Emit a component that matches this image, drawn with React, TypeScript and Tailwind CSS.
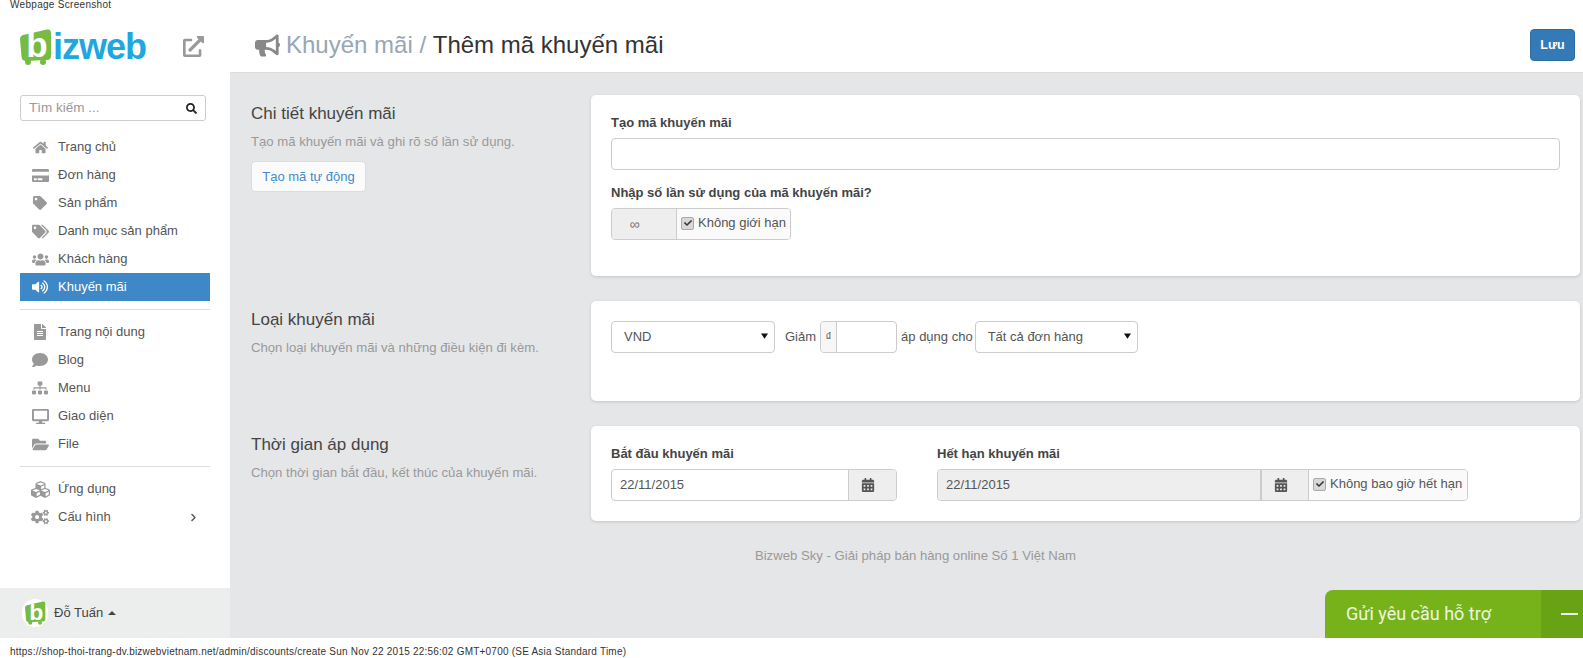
import type { ReactNode } from "react";
import {
  FaBullhorn,
  FaCalendarAlt,
  FaCogs,
  FaComment,
  FaCreditCard,
  FaCubes,
  FaDesktop,
  FaExternalLinkAlt,
  FaFileAlt,
  FaFolderOpen,
  FaHome,
  FaSearch,
  FaSitemap,
  FaTag,
  FaTags,
  FaUsers,
  FaVolumeUp,
  FaCheck,
  FaChevronRight,
} from "react-icons/fa";

const firstMenu = [
  { label: "Trang chủ", icon: <FaHome size={15} /> },
  { label: "Đơn hàng", icon: <FaCreditCard size={17} /> },
  { label: "Sản phẩm", icon: <FaTag size={14} /> },
  { label: "Danh mục sản phẩm", icon: <FaTags size={17} /> },
  { label: "Khách hàng", icon: <FaUsers size={17} /> },
  { label: "Khuyến mãi", icon: <FaVolumeUp size={16} />, active: true },
];

const secondMenu = [
  { label: "Trang nội dung", icon: <FaFileAlt size={16} /> },
  { label: "Blog", icon: <FaComment size={16} /> },
  { label: "Menu", icon: <FaSitemap size={16} /> },
  { label: "Giao diện", icon: <FaDesktop size={17} /> },
  { label: "File", icon: <FaFolderOpen size={17} /> },
];

const MenuRow = ({
  label,
  icon,
  active,
  arrow,
}: {
  label: string;
  icon: ReactNode;
  active?: boolean;
  arrow?: boolean;
}) => {
  return (
    <div
      className={`h-[28px] flex items-center text-[13px] ${
        active ? "bg-[#3f88c8] text-white" : "text-[#555]"
      }`}
    >
      <span
        className={`w-[38px] flex justify-center shrink-0 pl-[2px] ${
          active ? "text-white" : "text-[#999]"
        }`}
      >
        {icon}
      </span>
      <span className="flex-1">{label}</span>
      {arrow && <FaChevronRight size={9} className="mr-[12px] text-[#555]" />}
    </div>
  );
};

const CartLogo = ({ className }: { className: string }) => {
  return (
    <svg viewBox="0 0 32 36" className={`overflow-visible ${className}`}>
      <path
        d="M3 6 L27 0.5 Q31 0 31 4 L31 27 Q31 31 27 31 L6 32 Q2 32 1.5 28 L0 10 Q0 7 3 6 Z"
        fill="#76bc43"
      />
      <circle cx="8" cy="33" r="3" fill="#76bc43" />
      <circle cx="23" cy="33" r="3" fill="#76bc43" />
      <text
        x="17"
        y="28"
        textAnchor="middle"
        fontSize="35"
        fontWeight="700"
        fontFamily="'Liberation Sans', sans-serif"
        fill="#fff"
      >
        b
      </text>
    </svg>
  );
};

const Check = () => {
  return (
    <span className="w-[13px] h-[13px] rounded-[2px] border border-[#aaa] bg-[#d8d8d8] flex items-center justify-center text-[#333] shrink-0">
      <FaCheck size={8} />
    </span>
  );
};

const SelectBox = ({ value, className }: { value: string; className: string }) => {
  return (
    <div className={`relative h-[32px] ${className}`}>
      <select className="w-full h-full appearance-none bg-white border border-[#ccc] rounded-[4px] pl-[12px] text-[13px] text-[#555]">
        <option>{value}</option>
      </select>
      <svg
        viewBox="0 0 8 6"
        className="absolute right-[7px] top-[12px] w-[7px] h-[6px] pointer-events-none"
      >
        <path d="M0 0 H8 L4 6 Z" fill="#111" />
      </svg>
    </div>
  );
};

const Section = ({
  title,
  desc,
  cardClass,
  extra,
  children,
}: {
  title: string;
  desc: string;
  cardClass: string;
  extra?: ReactNode;
  children: ReactNode;
}) => {
  return (
    <div className="flex">
      <div className="w-[340px] shrink-0 pt-[7px]">
        <h2 className="text-[17px] leading-[24px] text-[#444]">{title}</h2>
        <p className="text-[13.15px] leading-[20px] mt-[6px] text-[#999]">{desc}</p>
        {extra}
      </div>
      <div
        className={`flex-1 bg-white rounded-[5px] shadow-[0_1px_3px_rgba(0,0,0,0.15)] px-[20px] ${cardClass}`}
      >
        {children}
      </div>
    </div>
  );
};

const App = () => {
  return (
    <div className="w-[1583px] h-[658px] overflow-hidden flex flex-col bg-white font-['Liberation_Sans',sans-serif]">
      <div className="h-[10px] pl-[10px] text-[10px] leading-[10px] tracking-[0.3px] text-[#333]">
        Webpage Screenshot
      </div>

      <div className="flex-1 flex min-h-0">
        {/* sidebar */}
        <aside className="w-[230px] shrink-0 flex flex-col">
          <div className="h-[62px] pl-[20px] pr-[26px] pt-[11px] flex items-center justify-between">
            <div className="flex items-center">
              <CartLogo className="w-[32px] h-[36px]" />
              <span className="text-[36px] leading-[36px] font-bold tracking-[-1px] text-[#1ea7e0] ml-[1px]">
                izweb
              </span>
            </div>
            <FaExternalLinkAlt size={21} className="text-[#999]" />
          </div>

          <div className="mx-[20px] w-[186px] mt-[23px] h-[26px] border border-[#ccc] rounded-[3px] flex items-center px-[8px]">
            <input
              placeholder="Tìm kiếm ..."
              className="flex-1 min-w-0 text-[13.5px] text-[#555] placeholder:text-[#999] outline-none"
            />
            <FaSearch size={11} className="text-[#222]" />
          </div>

          <nav className="mx-[20px] mt-[12px]">
            {firstMenu.map((item) => (
              <MenuRow key={item.label} {...item} />
            ))}
            <div className="h-px bg-[#ddd] mt-[8px] mb-[8px]" />
            {secondMenu.map((item) => (
              <MenuRow key={item.label} {...item} />
            ))}
            <div className="h-px bg-[#ddd] mt-[8px] mb-[8px]" />
            <MenuRow label="Ứng dụng" icon={<FaCubes size={19} />} />
            <MenuRow label="Cấu hình" icon={<FaCogs size={18} />} arrow />
          </nav>

          <div className="mt-auto h-[50px] bg-[#eceeee] flex items-center pl-[22px] text-[13px] text-[#444]">
            <span className="w-[26px] h-[28px] rounded-full bg-white flex items-center justify-center">
              <CartLogo className="w-[21px] h-[24px]" />
            </span>
            <span className="ml-[6px]">Đỗ Tuấn</span>
            <svg viewBox="0 0 8 4" className="w-[8px] h-[4px] ml-[5px]">
              <path d="M0 4 L4 0 L8 4 Z" fill="#444" />
            </svg>
          </div>
        </aside>

        <div className="flex-1 min-w-0 flex flex-col">
          {/* header */}
          <header className="h-[63px] shrink-0 flex items-center justify-between pt-[8px] pl-[25px] pr-[8px] border-b border-[#ddd]">
            <div className="flex items-center text-[24px]">
              <FaBullhorn size={25} className="text-[#888] mr-[6px]" />
              <span className="text-[#97a6b6]">Khuyến mãi /&nbsp;</span>
              <span className="text-[#333]">Thêm mã khuyến mãi</span>
            </div>
            <button className="w-[45px] h-[32px] bg-[#337ab7] border border-[#2e6da4] rounded-[4px] text-white text-[12.5px] font-bold">
              Lưu
            </button>
          </header>

          {/* content */}
          <main className="relative flex-1 min-h-0 bg-[#e5e6e8] pl-[21px] pr-[3px] pt-[22px]">
            <div className="flex flex-col gap-[25px]">
              <Section
                title="Chi tiết khuyến mãi"
                desc="Tạo mã khuyến mãi và ghi rõ số lần sử dụng."
                cardClass="h-[181px]"
                extra={
                  <button className="mt-[9px] h-[31px] w-[115px] bg-[#fbfbfb] border border-[#ddd] rounded-[4px] text-[13px] text-[#428bca]">
                    Tạo mã tự động
                  </button>
                }
              >
                <label className="block pt-[18px] text-[13px] leading-[20px] font-bold text-[#444]">
                  Tạo mã khuyến mãi
                </label>
                <input className="block w-full h-[32px] mt-[5px] border border-[#ccc] rounded-[4px]" />
                <label className="block mt-[13px] text-[13px] leading-[20px] font-bold text-[#444]">
                  Nhập số lần sử dụng của mã khuyến mãi?
                </label>
                <div className="flex w-[180px] h-[32px] mt-[5px] border border-[#ccc] rounded-[4px] overflow-hidden">
                  <div className="w-[65px] bg-[#eee] border-r border-[#ccc] flex items-center justify-center pr-[19px] text-[14px] text-[#777]">
                    ∞
                  </div>
                  <div className="flex-1 bg-[#fafafa] flex items-center pl-[4px] pb-[2px] gap-[4px] text-[13px] text-[#555] whitespace-nowrap">
                    <Check />
                    <span>Không giới hạn</span>
                  </div>
                </div>
              </Section>

              <Section
                title="Loại khuyến mãi"
                desc="Chọn loại khuyến mãi và những điều kiện đi kèm."
                cardClass="h-[100px]"
              >
                <div className="flex items-center pt-[20px] text-[13px] text-[#555]">
                  <SelectBox value="VND" className="w-[164px]" />
                  <span className="ml-[10px]">Giảm</span>
                  <div className="ml-[4px] flex w-[77px] h-[32px] border border-[#ccc] rounded-[4px] overflow-hidden">
                    <span className="w-[16px] bg-[#f7f7f7] border-r border-[#ccc] flex items-center justify-center text-[12px]">
                      ₫
                    </span>
                    <input className="flex-1 min-w-0" />
                  </div>
                  <span className="ml-[4px]">áp dụng cho</span>
                  <SelectBox value="Tất cả đơn hàng" className="w-[163px] ml-[2px]" />
                </div>
              </Section>

              <Section
                title="Thời gian áp dụng"
                desc="Chọn thời gian bắt đầu, kết thúc của khuyến mãi."
                cardClass="h-[95px]"
              >
                <div className="flex gap-[40px] pt-[18px]">
                  <div className="w-[286px]">
                    <label className="block text-[13px] leading-[20px] font-bold text-[#444]">
                      Bắt đầu khuyến mãi
                    </label>
                    <div className="flex h-[32px] mt-[5px] border border-[#ccc] rounded-[4px] overflow-hidden">
                      <input
                        readOnly
                        defaultValue="22/11/2015"
                        className="flex-1 min-w-0 pl-[8px] text-[13px] text-[#555]"
                      />
                      <span className="w-[48px] bg-[#eee] border-l border-[#ccc] flex items-center pl-[12px] text-[#555]">
                        <FaCalendarAlt size={14} />
                      </span>
                    </div>
                  </div>
                  <div className="w-[531px]">
                    <label className="block text-[13px] leading-[20px] font-bold text-[#444]">
                      Hết hạn khuyến mãi
                    </label>
                    <div className="flex h-[32px] mt-[5px] border border-[#ccc] rounded-[4px] overflow-hidden">
                      <input
                        readOnly
                        defaultValue="22/11/2015"
                        className="flex-1 min-w-0 pl-[8px] bg-[#eee] text-[13px] text-[#555]"
                      />
                      <span className="w-[48px] bg-[#eee] border-l-2 border-[#ccc] flex items-center pl-[12px] text-[#555]">
                        <FaCalendarAlt size={14} />
                      </span>
                      <div className="w-[159px] bg-[#fafafa] border-l border-[#ccc] flex items-center pl-[4px] pb-[2px] gap-[4px] text-[13px] text-[#555] whitespace-nowrap">
                        <Check />
                        <span>Không bao giờ hết hạn</span>
                      </div>
                    </div>
                  </div>
                </div>
              </Section>
            </div>

            <p className="mt-[25px] text-center text-[13.15px] leading-[20px] text-[#999]">
              Bizweb Sky - Giải pháp bán hàng online Số 1 Việt Nam
            </p>

            {/* support widget */}
            <div className="absolute right-0 bottom-0 w-[258px] h-[48px] flex bg-[#76b31a] rounded-tl-[8px] text-[#eef5e0] overflow-hidden">
              <span className="flex-1 pl-[21px] font-['Roboto',sans-serif] text-[18px] leading-[48px]">
                Gửi yêu cầu hỗ trợ
              </span>
              <span className="w-[42px] bg-[#68a315] flex items-center justify-end pr-[5px]">
                <span className="w-[17px] h-[2px] bg-[#eef5e0]" />
              </span>
            </div>
          </main>
        </div>
      </div>

      <div className="h-[20px] pl-[10px] pt-[7px] text-[10px] leading-[13px] tracking-[0.22px] text-[#333]">
        https://shop-thoi-trang-dv.bizwebvietnam.net/admin/discounts/create Sun Nov 22 2015 22:56:02
        GMT+0700 (SE Asia Standard Time)
      </div>
    </div>
  );
};

export default App;
